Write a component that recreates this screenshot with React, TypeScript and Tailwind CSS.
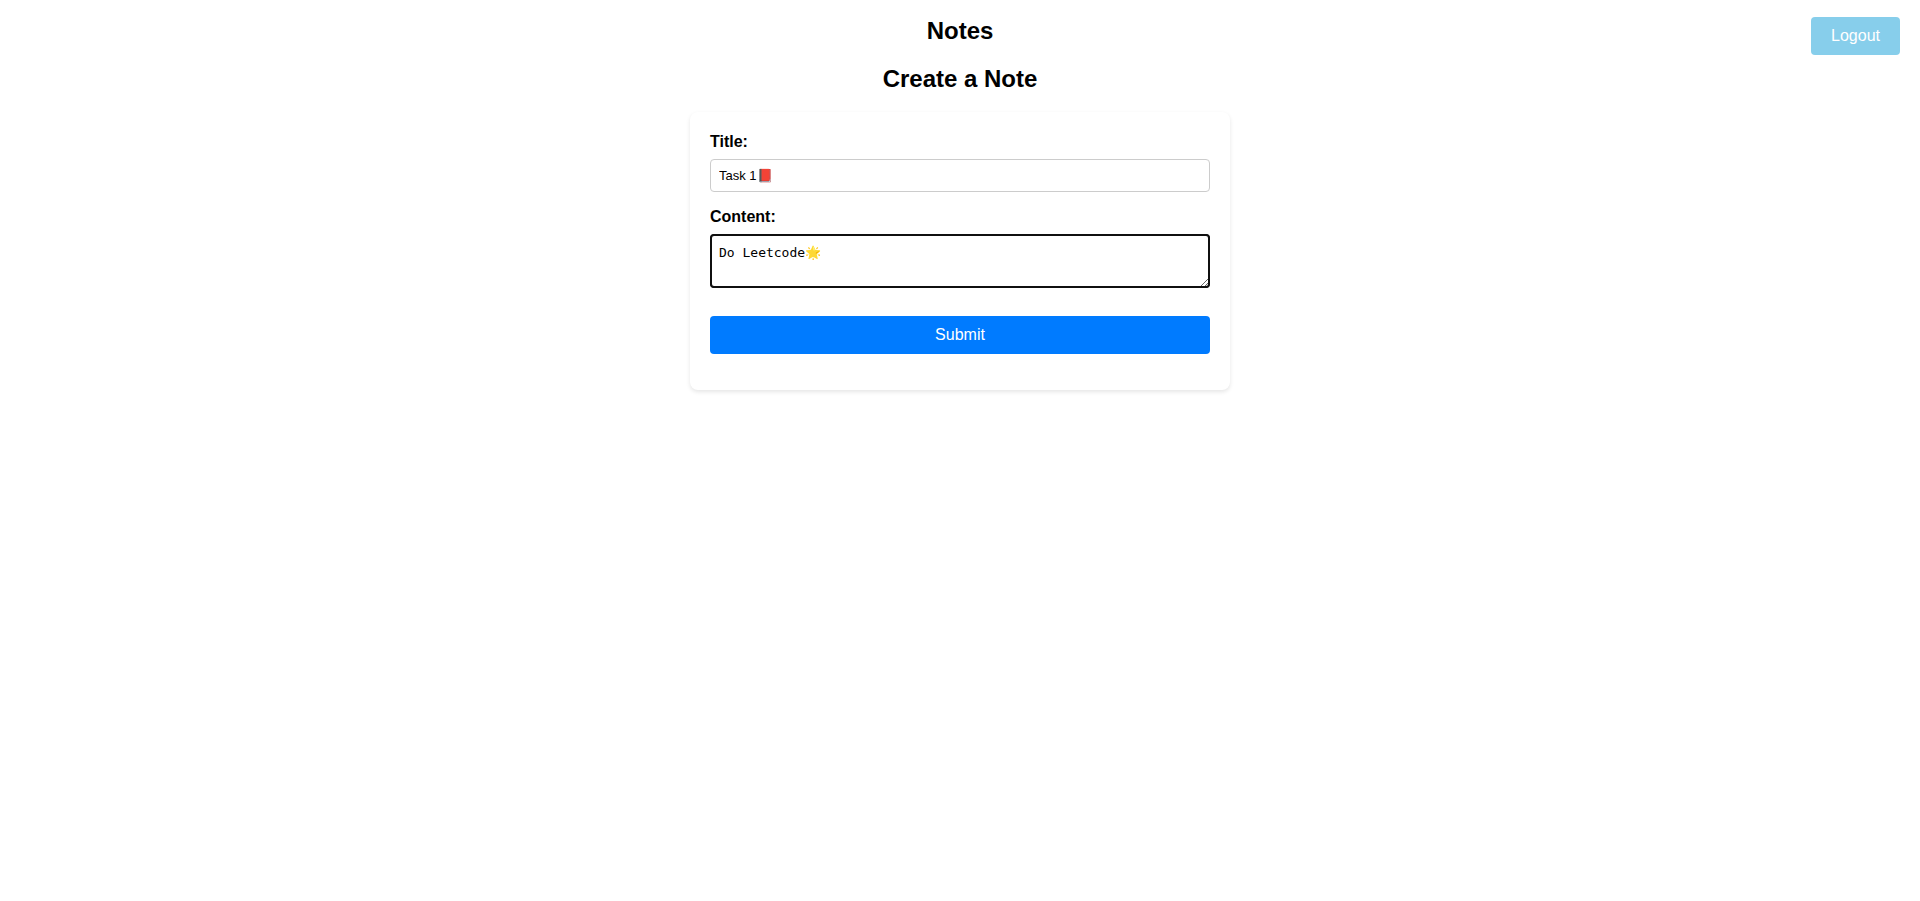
import { useState } from "react";
import type { FormEvent } from "react";

function TopBar() {
  return (
    <header className="grid grid-cols-[1fr_auto_1fr] items-start px-5 pt-[17px]">
      <h1 className="col-start-2 text-2xl leading-[27px] font-bold">Notes</h1>
      <button
        type="button"
        className="h-[38px] cursor-pointer justify-self-end rounded-[4px] bg-[#87ceeb] px-5 text-base leading-[18px] text-white"
      >
        Logout
      </button>
    </header>
  );
}

function NoteForm() {
  const [title, setTitle] = useState("Task 1📕");
  const [content, setContent] = useState("Do Leetcode🌟");

  const handleSubmit = (event: FormEvent) => event.preventDefault();

  return (
    <form
      onSubmit={handleSubmit}
      className="mx-auto mt-5 flex w-full max-w-[540px] flex-col rounded-lg bg-white px-5 pt-5 pb-9 shadow-[0_2px_4px_rgba(0,0,0,0.1)]"
    >
      <label htmlFor="title" className="text-base leading-5 font-bold">
        Title:
      </label>
      <input
        id="title"
        type="text"
        value={title}
        onChange={(event) => setTitle(event.target.value)}
        className="mt-[7px] h-[33px] w-full rounded-[4px] border border-[#ccc] px-2 text-[13px] outline-none"
      />
      <label htmlFor="content" className="mt-[15px] text-base leading-5 font-bold">
        Content:
      </label>
      <textarea
        id="content"
        rows={2}
        value={content}
        onChange={(event) => setContent(event.target.value)}
        className="mt-[7px] h-[54px] w-full resize rounded-[4px] border border-[#101010] px-2 py-2.5 font-['DejaVu_Sans_Mono',monospace] text-[13px] leading-[16px] outline-2 -outline-offset-2 outline-[#101010]"
      />
      <button
        type="submit"
        className="mt-7 h-[38px] w-full cursor-pointer rounded-[4px] bg-[#007bff] text-base leading-[18px] text-white"
      >
        Submit
      </button>
    </form>
  );
}

export default function App() {
  return (
    <div className="min-h-screen bg-white font-['Liberation_Sans',Arial,sans-serif] text-black">
      <TopBar />
      <main className="px-5 pt-2.5 pb-5">
        <h2 className="text-center text-2xl leading-[27px] font-bold">Create a Note</h2>
        <NoteForm />
      </main>
    </div>
  );
}
